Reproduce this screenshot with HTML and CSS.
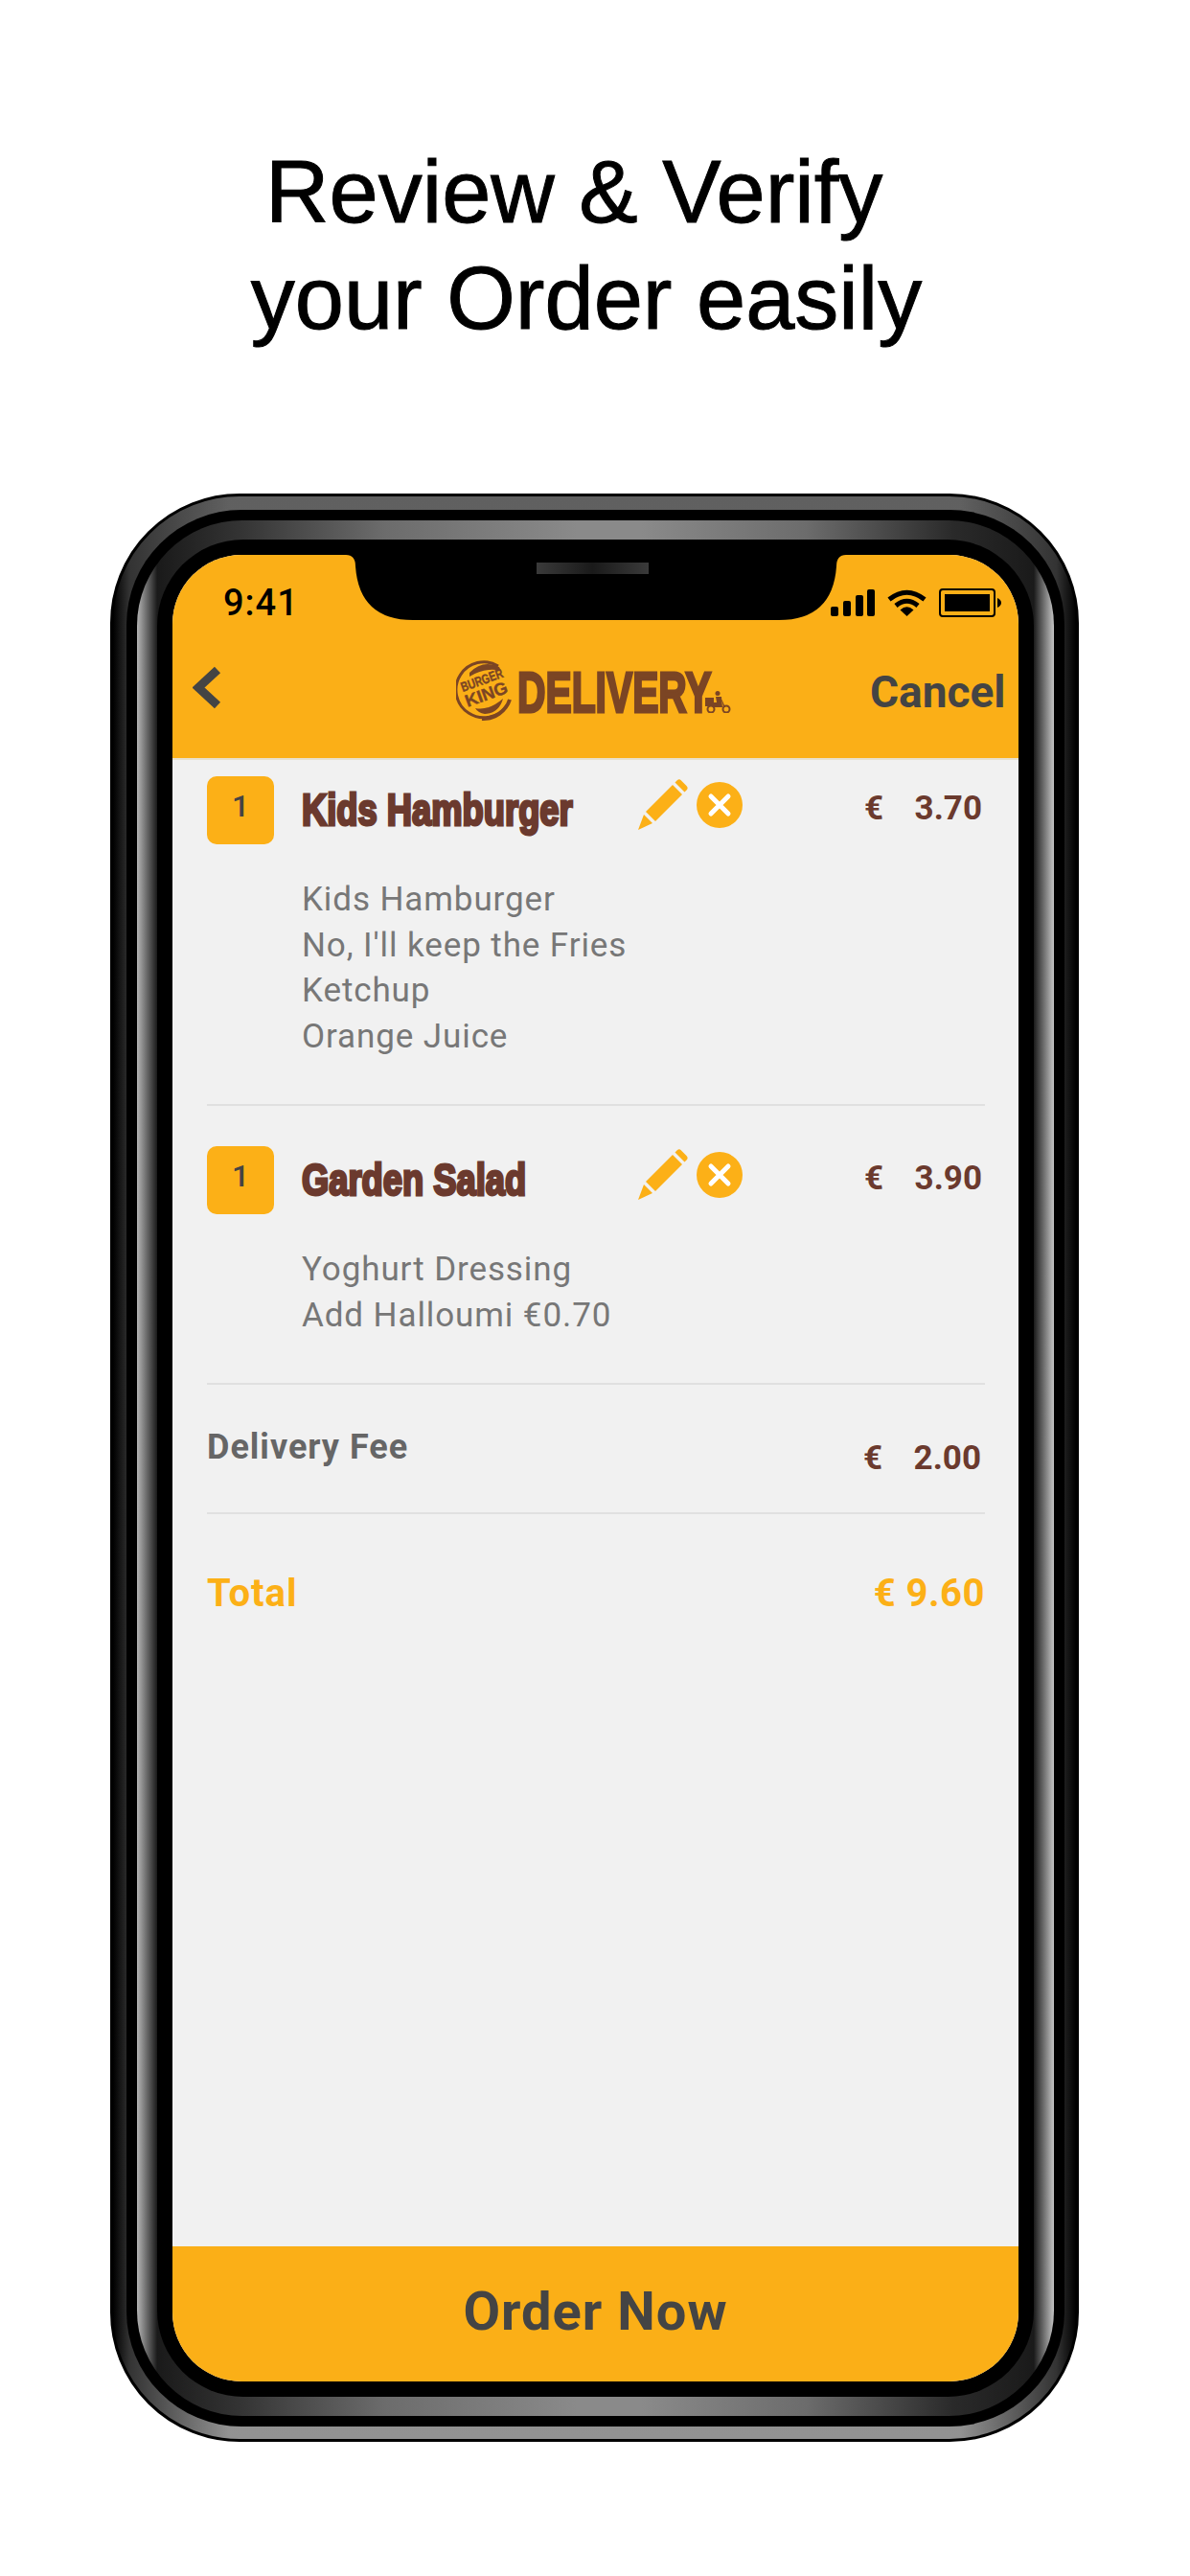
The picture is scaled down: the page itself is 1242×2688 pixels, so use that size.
FILE: index.html
```html
<!DOCTYPE html>
<html lang="en">
<head>
    <meta charset="UTF-8">
    <meta name="viewport" content="width=device-width, initial-scale=1.0">
    <title>Review order</title>
    <link rel="stylesheet" href="styles.css">
</head>
<body>
    <h1 class="headline">Review &amp; Verify&nbsp;<br>your Order easily</h1>

    <div class="phone">
        <div class="phone-gap">
            <div class="phone-band">
                <div class="phone-bezel">
                    <div class="screen">
                        <svg class="notch" width="522" height="68" viewBox="0 0 522 68">
                            <path d="M0 0H522Q512 0 512 12Q508 68 452 68H70Q14 68 10 12Q10 0 0 0Z" fill="#000"/>
                        </svg>
                        <div class="speaker"></div>

                        <header class="app-header">
                            <div class="status">
                                <span class="time">9:41</span>
                                <div class="status-icons">
                                    <svg width="46" height="28" viewBox="0 0 46 28">
                                        <rect x="0" y="18" width="8" height="10" rx="2"/>
                                        <rect x="13" y="12" width="8" height="16" rx="2"/>
                                        <rect x="26" y="6" width="8" height="22" rx="2"/>
                                        <rect x="38" y="0" width="8" height="28" rx="2"/>
                                    </svg>
                                    <svg width="41" height="28" viewBox="0 0 41 28">
                                        <path d="M2 10.500Q20.500 -4 39 10.500" fill="none" stroke="#000" stroke-width="5"/>
                                        <path d="M9 17Q20.500 7.500 32 17" fill="none" stroke="#000" stroke-width="5"/>
                                        <path d="M13.500 21.500Q20.500 15 27.500 21.500L20.500 28Z"/>
                                    </svg>
                                    <svg width="65" height="30" viewBox="0 0 65 30">
                                        <rect x="1" y="1" width="57" height="28" rx="3" fill="none" stroke="#000" stroke-width="2"/>
                                        <rect x="6" y="6" width="47" height="18"/>
                                        <path d="M61 10Q65 12 65 15Q65 18 61 20Z"/>
                                    </svg>
                                </div>
                            </div>
                            <nav class="nav">
                                <svg class="back" width="31" height="47" viewBox="0 0 31 47">
                                    <path d="M26 5L6 23.500L26 42" fill="none" stroke="#444" stroke-width="9"/>
                                </svg>
                                <div class="logo">
                                    <svg class="bk-mark" width="60" height="64" viewBox="0 0 60 64">
                                        <path d="M44 6A29 29 0 1 0 53 47" fill="none" stroke="#7b4524" stroke-width="3"/>
                                        <path d="M14 13Q28 -1 45 7L47 11Q30 7 14 17Z" fill="#7b4524"/>
                                        <path d="M20 50Q34 53 49 40Q45 55 30 56Q23 55 20 50Z" fill="#7b4524"/>
                                        <path d="M56 41A29 29 0 0 1 27 61" fill="none" stroke="#7b4524" stroke-width="4"/>
                                        <text class="bk-text" transform="translate(7 33) rotate(-20)" textLength="46" lengthAdjust="spacingAndGlyphs">BURGER</text>
                                        <text class="bk-text bk-king" transform="translate(12 49) rotate(-20)" textLength="46" lengthAdjust="spacingAndGlyphs">KING</text>
                                    </svg>
                                    <span class="logo-word">DELIVERY</span>
                                    <svg class="scooter" width="27" height="23" viewBox="0 0 27 23">
                                        <rect x="0" y="7" width="9" height="9" fill="#7b4524"/>
                                        <circle cx="6" cy="19" r="3.500" fill="none" stroke="#7b4524" stroke-width="2"/>
                                        <circle cx="22" cy="19" r="3.500" fill="none" stroke="#7b4524" stroke-width="2"/>
                                        <circle cx="13" cy="2.500" r="2.500" fill="#7b4524"/>
                                        <path d="M9 17H18L17 6H11L12 12H9ZM17 8L21 17H19Z" fill="#7b4524"/>
                                    </svg>
                                </div>
                                <span class="cancel">Cancel</span>
                            </nav>
                        </header>

                        <main class="order">
                            <section class="item item-first">
                                <div class="item-top">
                                    <span class="qty">1</span>
                                    <div class="item-name-wrap"><h2 class="item-name">Kids Hamburger</h2></div>
                                    <svg class="pencil" width="52" height="53" viewBox="0 0 52 53">
                                        <path d="M8 34L36 6L46 16L18 44Z"/>
                                        <path d="M38.500 3.500L41 1Q43 -0.500 45 1.500L50.500 7Q52.500 9 51 11L48.500 13.500Z"/>
                                        <path d="M6 37L15 46L0 53Z"/>
                                    </svg>
                                    <svg class="remove" width="48" height="48" viewBox="0 0 48 48">
                                        <circle cx="24" cy="24" r="24" fill="#fcb017"/>
                                        <path d="M15 15L33 33M33 15L15 33" stroke="#fff" stroke-width="5" stroke-linecap="round"/>
                                    </svg>
                                    <div class="price"><span>€</span><span>3.70</span></div>
                                </div>
                                <ul class="options">
                                    <li>Kids Hamburger</li>
                                    <li>No, I'll keep the Fries</li>
                                    <li>Ketchup</li>
                                    <li>Orange Juice</li>
                                </ul>
                            </section>

                            <section class="item item-second">
                                <div class="item-top">
                                    <span class="qty">1</span>
                                    <div class="item-name-wrap"><h2 class="item-name">Garden Salad</h2></div>
                                    <svg class="pencil" width="52" height="53" viewBox="0 0 52 53">
                                        <path d="M8 34L36 6L46 16L18 44Z"/>
                                        <path d="M38.500 3.500L41 1Q43 -0.500 45 1.500L50.500 7Q52.500 9 51 11L48.500 13.500Z"/>
                                        <path d="M6 37L15 46L0 53Z"/>
                                    </svg>
                                    <svg class="remove" width="48" height="48" viewBox="0 0 48 48">
                                        <circle cx="24" cy="24" r="24" fill="#fcb017"/>
                                        <path d="M15 15L33 33M33 15L15 33" stroke="#fff" stroke-width="5" stroke-linecap="round"/>
                                    </svg>
                                    <div class="price"><span>€</span><span>3.90</span></div>
                                </div>
                                <ul class="options">
                                    <li>Yoghurt Dressing</li>
                                    <li>Add Halloumi €0.70</li>
                                </ul>
                            </section>

                            <div class="fee">
                                <span class="fee-label">Delivery Fee</span>
                                <div class="price"><span>€</span><span>2.00</span></div>
                            </div>

                            <div class="total">
                                <span>Total</span>
                                <span class="total-value">€ 9.60</span>
                            </div>
                        </main>

                        <button class="order-now">Order Now</button>
                    </div>
                </div>
            </div>
        </div>
    </div>
</body>
</html>
```

FILE: styles.css
```css
body {
    margin: 0;
    width: 1242px;
    height: 2688px;
    overflow: hidden;
    background-color: #fff;
    font-family: "Liberation Sans", Arial, sans-serif;
}

.headline {
    margin: 0;
    height: 515px;
    box-sizing: border-box;
    padding: 145px 18px 0 0;
    font-size: 92px;
    line-height: 111px;
    font-weight: 400;
    text-align: center;
    color: #000;
    -webkit-text-stroke: 1px #000;
}

/* phone frame: nested rounded boxes */
.phone {
    width: 1011px;
    height: 2033px;
    box-sizing: border-box;
    margin-left: 115px;
    padding: 14px 12px 13px 14px;
    border: 3px solid #000;
    border-radius: 135px;
    background:
        linear-gradient(90deg, #000 0, #333 1.7%, transparent 12%, transparent 88%, #333 98%, #000 100%),
        linear-gradient(180deg, #606060 0, #929292 100%);
}

.phone-gap {
    height: 100%;
    box-sizing: border-box;
    padding: 11px;
    background-color: #000;
    border-radius: 120px;
}

.phone-band {
    height: 100%;
    box-sizing: border-box;
    padding: 20px 21px;
    border-radius: 110px;
    background: linear-gradient(90deg, #b5b5b5 0, #1a1a1a 2.2%, #333 11%, #6c6c6c 27%, #8a8a8a 48%, #8a8a8a 55%, #6c6c6c 73%, #2a2a2a 89%, #1a1a1a 97.800%, #c4c4c4 100%);
}

.phone-bezel {
    height: 100%;
    box-sizing: border-box;
    padding: 16px;
    background-color: #000;
    border-radius: 90px;
}

.screen {
    position: relative;
    height: 100%;
    display: flex;
    flex-direction: column;
    overflow: hidden;
    border-radius: 72px;
    background-color: #f1f1f1;
    font-family: Roboto, "Liberation Sans", sans-serif;
}

.notch {
    position: absolute;
    top: 0;
    left: 181px;
}

.speaker {
    position: absolute;
    top: 8px;
    left: 380px;
    width: 117px;
    height: 12px;
    background: linear-gradient(90deg, #3a3a3a, #1a1a1a 50%, #3a3a3a);
}

/* header */
.app-header {
    height: 214px;
    flex: none;
    box-sizing: border-box;
    background-color: #fbaf17;
    border-bottom: 2px solid #e8e0cc;
}

.status {
    display: flex;
    justify-content: space-between;
    align-items: center;
    height: 30px;
    padding: 35px 18px 0 53px;
}

.time {
    font-size: 38px;
    font-weight: 500;
    line-height: 30px;
    color: #000;
    letter-spacing: 1px;
}

.status-icons {
    display: flex;
    align-items: center;
    gap: 13px;
}

.nav {
    display: flex;
    align-items: flex-start;
    padding: 50px 0 0 21px;
}

.back {
    flex: none;
    margin-right: 244px;
}

.logo {
    display: flex;
    align-items: flex-start;
    flex: none;
    width: 287px;
    margin-right: 145px;
    margin-top: -5px;
}

.bk-mark,
.scooter {
    flex: none;
}

.bk-text {
    font-family: "Liberation Sans", sans-serif;
    font-weight: 700;
    font-size: 14px;
    fill: #7b4524;
    stroke: #7b4524;
    stroke-width: 0.4px;
}

.bk-king {
    font-size: 18px;
}

.logo-word {
    flex: none;
    width: 198px;
    margin: 0 0 0 4px;
    font-weight: 700;
    font-family: "Liberation Sans", sans-serif;
    font-size: 60px;
    line-height: 68px;
    white-space: nowrap;
    color: #7b4524;
    -webkit-text-stroke: 3px #7b4524;
    transform: scaleX(0.68);
    transform-origin: left;
}

.scooter {
    margin: 32px 0 0 -2px;
}

.cancel {
    margin-top: 5px;
    font-size: 46px;
    line-height: 46px;
    font-weight: 700;
    color: #444;
}

/* order list */
.order {
    flex: 1;
    padding: 17px 35px 0 36px;
}

.item {
    border-bottom: 2px solid #e0e0e0;
}

.item-first {
    height: 342px;
}

.item-second {
    height: 247px;
    margin-top: 42px;
}

.item-top {
    display: flex;
    align-items: flex-start;
}

.qty {
    flex: none;
    width: 70px;
    height: 71px;
    border-radius: 10px;
    background-color: #fcb017;
    color: #444;
    font-size: 32px;
    font-weight: 500;
    line-height: 62px;
    text-align: center;
}

.item-name-wrap {
    flex: none;
    width: 380px;
    padding-left: 29px;
    box-sizing: border-box;
}

.item-name {
    margin: 9px 0 0;
    font-family: "Liberation Sans", sans-serif;
    font-size: 46px;
    line-height: 52px;
    font-weight: 700;
    white-space: nowrap;
    color: #6b3a2e;
    -webkit-text-stroke: 3px #6b3a2e;
    transform: scaleX(0.79);
    transform-origin: left;
}

.pencil {
    flex: none;
    margin-top: 3px;
    fill: #fcb017;
}

.remove {
    flex: none;
    margin: 6px 0 0 9px;
}

.price {
    display: flex;
    justify-content: space-between;
    width: 123px;
    margin: 14px 0 0 127px;
    font-size: 35px;
    line-height: 40px;
    font-weight: 700;
    color: #6b3a2e;
}

.options {
    margin: 34px 0 0;
    padding: 0 0 0 99px;
    list-style: none;
    font-size: 35px;
    line-height: 47.500px;
    letter-spacing: 0.9px;
    color: #777;
}

.fee {
    display: flex;
    justify-content: space-between;
    height: 135px;
    border-bottom: 2px solid #e0e0e0;
    box-sizing: border-box;
}

.fee-label {
    margin-top: 43px;
    font-size: 36px;
    line-height: 44px;
    font-weight: 700;
    letter-spacing: 1px;
    color: #666;
}

.fee .price {
    margin: 57px 4px 0 0;
}

.total {
    display: flex;
    justify-content: space-between;
    padding: 60px 0 0;
    font-size: 40px;
    line-height: 46px;
    font-weight: 700;
    letter-spacing: 1px;
    color: #fcb017;
}

.total-value {
    letter-spacing: 0.5px;
}

.order-now {
    flex: none;
    height: 141px;
    padding: 0 0 5px;
    border: none;
    background-color: #fbaf17;
    color: #444;
    font-family: Roboto, "Liberation Sans", sans-serif;
    font-size: 56px;
    font-weight: 700;
    letter-spacing: 1px;
}
```
